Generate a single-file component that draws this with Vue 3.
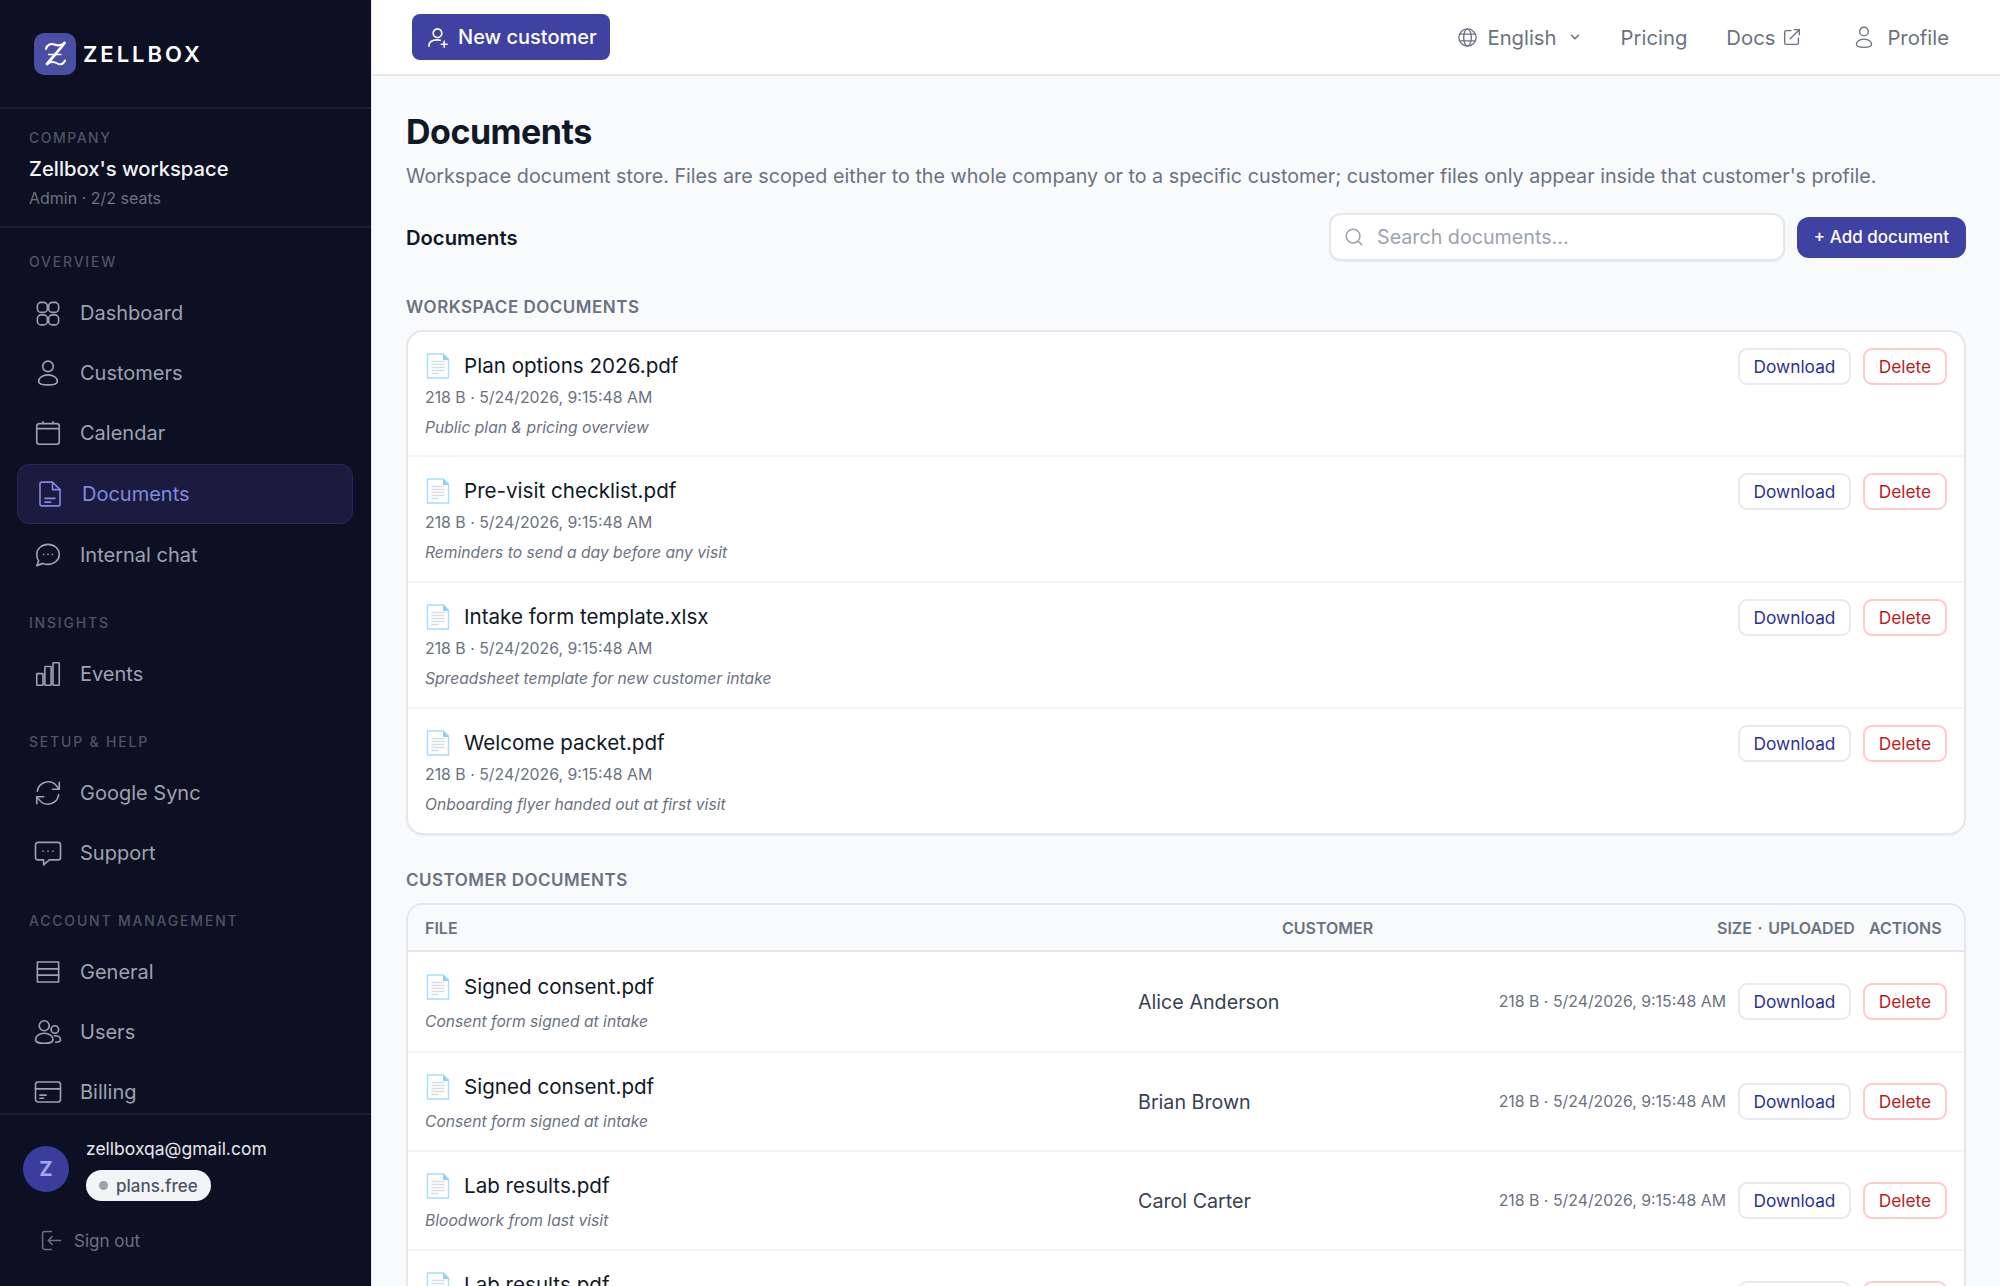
<template>
  <div class="app">
    <aside class="sidebar">
      <div class="brand">
        <svg class="logo" viewBox="0 0 42 42">
          <rect width="42" height="42" rx="10" fill="#4a4fa3" />
          <path d="M12 16C13 11.500 17 10 20.500 11.500C24 13 27.500 12.500 30.500 10" fill="none" stroke="#fff" stroke-width="2" stroke-linecap="round" />
          <path d="M30.500 10C26.500 15.500 18.500 24.500 13 31" fill="none" stroke="#fff" stroke-width="2.800" stroke-linecap="round" />
          <path d="M13 31C16.500 28 20 28.500 23.500 30.500C26.500 32.200 29.500 31 31 27.500" fill="none" stroke="#fff" stroke-width="2" stroke-linecap="round" />
          <path d="M14.500 21.500H27" fill="none" stroke="#fff" stroke-width="1.300" stroke-linecap="round" />
        </svg>
        <span class="wordmark">ZELLBOX</span>
      </div>

      <div class="company">
        <div class="company-label">COMPANY</div>
        <div class="company-name">Zellbox's workspace</div>
        <div class="company-meta">Admin · 2/2 seats</div>
      </div>

      <nav class="nav">
        <template v-for="section in sections" :key="section.title">
          <div class="nav-title">{{ section.title }}</div>
          <a
            v-for="item in section.items"
            :key="item.label"
            class="nav-item"
            :class="{ active: item.label === 'Documents' }"
          >
            <svg class="nav-icon" viewBox="0 0 24 24" fill="none" stroke="currentColor" stroke-width="1.300" stroke-linecap="round" stroke-linejoin="round">
              <path v-for="d in icons[item.icon]" :key="d" :d="d" />
            </svg>
            <span>{{ item.label }}</span>
          </a>
        </template>
      </nav>

      <div class="account">
        <div class="account-row">
          <div class="avatar">Z</div>
          <div class="account-info">
            <div class="email">zellboxqa@gmail.com</div>
            <span class="plan"><i class="plan-dot"></i>plans.free</span>
          </div>
        </div>
        <a class="signout">
          <svg viewBox="0 0 24 24" fill="none" stroke="currentColor" stroke-width="1.300" stroke-linecap="round" stroke-linejoin="round">
            <path d="M13 4H6.500A1.500 1.500 0 0 0 5 5.500v13A1.500 1.500 0 0 0 6.500 20H13M21 12H10M10 12l3.500-3.500M10 12l3.500 3.500" />
          </svg>
          <span>Sign out</span>
        </a>
      </div>
    </aside>

    <div class="main">
      <header class="topbar">
        <button class="new-customer">
          <svg viewBox="0 0 24 24" fill="none" stroke="currentColor" stroke-width="1.700" stroke-linecap="round" stroke-linejoin="round">
            <circle cx="12" cy="7.500" r="4.500" />
            <path d="M3 21c0-4.500 3.800-6.500 9-6.500 1 0 2 .1 2.800.3M19 16v6M16 19h6" />
          </svg>
          New customer
        </button>
        <div class="top-links">
          <a class="top-link lang">
            <svg class="globe" viewBox="0 0 24 24" fill="none" stroke="currentColor" stroke-width="1.400">
              <circle cx="12" cy="12" r="9" />
              <ellipse cx="12" cy="12" rx="4" ry="9" />
              <path d="M3.800 8.500h16.400M3.800 15.500h16.400" />
            </svg>
            English
            <svg class="chevron" viewBox="0 0 12 12" fill="none" stroke="currentColor" stroke-width="1.300" stroke-linecap="round" stroke-linejoin="round">
              <path d="M3 4.500 6 7.500 9 4.500" />
            </svg>
          </a>
          <a class="top-link">Pricing</a>
          <a class="top-link docs">
            Docs
            <svg class="external" viewBox="0 0 24 24" fill="none" stroke="currentColor" stroke-width="1.500" stroke-linecap="round" stroke-linejoin="round">
              <path d="M11 5H5.500A1.500 1.500 0 0 0 4 6.500v12A1.500 1.500 0 0 0 5.500 20h12a1.500 1.500 0 0 0 1.500-1.500V13M10 14 20 4M14.500 4H20v5.500" />
            </svg>
          </a>
          <a class="top-link profile">
            <svg class="person" viewBox="0 0 24 24" fill="none" stroke="currentColor" stroke-width="1.200" stroke-linecap="round">
              <circle cx="12" cy="7" r="4" />
              <path d="M12 14c-4.500 0-7 2.500-7 5 0 1.500 2 2.500 7 2.500s7-1 7-2.500c0-2.500-2.500-5-7-5z" />
            </svg>
            Profile
          </a>
        </div>
      </header>

      <main class="content">
        <h1>Documents</h1>
        <p class="lead">Workspace document store. Files are scoped either to the whole company or to a specific customer; customer files only appear inside that customer's profile.</p>

        <div class="toolbar">
          <h2>Documents</h2>
          <div class="search">
            <svg viewBox="0 0 24 24" fill="none" stroke="currentColor" stroke-width="1.700" stroke-linecap="round">
              <circle cx="11" cy="11" r="7.500" />
              <path d="m16.500 16.500 4 4" />
            </svg>
            <span>Search documents...</span>
          </div>
          <button class="add-doc">+ Add document</button>
        </div>

        <div class="section-label first">WORKSPACE DOCUMENTS</div>
        <div class="card">
          <div v-for="doc in workspaceDocs" :key="doc.name" class="doc-row">
            <div class="doc-info">
              <div class="doc-name">
                <svg class="file-icon" viewBox="0 0 26 26">
                  <path d="M2.500 1h16l5 5v19h-21z" fill="#fff" stroke="#a9dcfa" stroke-width="1.400" />
                  <path d="M18 1v6h6z" fill="#8fd0f7" />
                  <path d="M6.500 8.500h13M6.500 11.500h13M6.500 14.500h13M6.500 17.500h13M6.500 20.500h7" stroke="#d8dde1" stroke-width="1.500" />
                </svg>
                {{ doc.name }}
              </div>
              <div class="doc-meta">218 B · 5/24/2026, 9:15:48 AM</div>
              <div class="doc-note">{{ doc.note }}</div>
            </div>
            <div class="actions">
              <button class="btn-download">Download</button>
              <button class="btn-delete">Delete</button>
            </div>
          </div>
        </div>

        <div class="section-label second">CUSTOMER DOCUMENTS</div>
        <div class="card table">
          <div class="table-head">
            <span>FILE</span>
            <span class="head-customer">CUSTOMER</span>
            <span class="head-size">SIZE · UPLOADED</span>
            <span class="head-actions">ACTIONS</span>
          </div>
          <div v-for="(doc, i) in customerDocs" :key="i" class="table-row">
            <div class="doc-info">
              <div class="doc-name">
                <svg class="file-icon" viewBox="0 0 26 26">
                  <path d="M2.500 1h16l5 5v19h-21z" fill="#fff" stroke="#a9dcfa" stroke-width="1.400" />
                  <path d="M18 1v6h6z" fill="#8fd0f7" />
                  <path d="M6.500 8.500h13M6.500 11.500h13M6.500 14.500h13M6.500 17.500h13M6.500 20.500h7" stroke="#d8dde1" stroke-width="1.500" />
                </svg>
                {{ doc.name }}
              </div>
              <div class="doc-note">{{ doc.note }}</div>
            </div>
            <div class="cell-customer">{{ doc.customer }}</div>
            <div class="cell-meta">218 B · 5/24/2026, 9:15:48 AM</div>
            <div class="actions">
              <button class="btn-download">Download</button>
              <button class="btn-delete">Delete</button>
            </div>
          </div>
        </div>
      </main>
    </div>
  </div>
</template>

<script setup>
const icons = {
  grid: [
    'M6.500 3.500h2a3 3 0 0 1 3 3v2a3 3 0 0 1-3 3h-2a3 3 0 0 1-3-3v-2a3 3 0 0 1 3-3z',
    'M15.500 3.500h2a3 3 0 0 1 3 3v2a3 3 0 0 1-3 3h-2a3 3 0 0 1-3-3v-2a3 3 0 0 1 3-3z',
    'M6.500 13.500h2a3 3 0 0 1 3 3v2a3 3 0 0 1-3 3h-2a3 3 0 0 1-3-3v-2a3 3 0 0 1 3-3z',
    'M15.500 13.500h2a3 3 0 0 1 3 3v2a3 3 0 0 1-3 3h-2a3 3 0 0 1-3-3v-2a3 3 0 0 1 3-3z'
  ],
  person: [
    'M12 2.500a4.200 4.200 0 1 0 0 8.400 4.200 4.200 0 0 0 0-8.400z',
    'M12 13.500c-4.500 0-7.500 2.500-7.500 5.300 0 1.700 3 2.700 7.500 2.700s7.500-1 7.500-2.700c0-2.800-3-5.300-7.500-5.300z'
  ],
  calendar: [
    'M5 4.500h14a2 2 0 0 1 2 2V19a2 2 0 0 1-2 2H5a2 2 0 0 1-2-2V6.500a2 2 0 0 1 2-2z',
    'M3 8.500h18',
    'M8 3v1.500M16 3v1.500'
  ],
  doc: [
    'M5.500 2.500h8.500l6 6v12a1 1 0 0 1-1 1H5.500a1.500 1.500 0 0 1-1.500-1.500V4a1.500 1.500 0 0 1 1.500-1.500z',
    'M14 2.500v6h6',
    'M8 15.500h8M8 18.500h4.500'
  ],
  chat: [
    'M12 3.500c5 0 9 3.500 9 8s-4 8-9 8c-1.500 0-2.800-.3-4-.8l-5 1.800 1.500-3.700C3.500 15.300 3 13.500 3 11.500c0-4.500 4-8 9-8z',
    'M8.500 11.500h.01M12 11.500h.01M15.500 11.500h.01'
  ],
  bars: [
    'M3.500 11.700h4a.5.500 0 0 1 .5.500V20.500a.5.500 0 0 1-.5.500h-4a.5.500 0 0 1-.5-.500v-8.300a.5.500 0 0 1 .5-.500z',
    'M10 6h4a.5.500 0 0 1 .5.500v14a.5.500 0 0 1-.5.500h-4a.5.500 0 0 1-.5-.500v-14a.5.500 0 0 1 .5-.500z',
    'M16.500 3h4a.5.500 0 0 1 .5.500v17a.5.500 0 0 1-.5.500h-4a.5.500 0 0 1-.5-.500v-17a.5.500 0 0 1 .5-.500z'
  ],
  sync: [
    'M3.500 10.500A8.700 8.700 0 0 1 19 6.500l2 2.500',
    'M21 3.500V9h-5.500',
    'M20.500 13.500A8.700 8.700 0 0 1 5 17.500L3 15',
    'M3 20.500V15h5.500'
  ],
  support: [
    'M4 3.500h16a2 2 0 0 1 2 2v10a2 2 0 0 1-2 2h-7l-4.500 4v-4H4a2 2 0 0 1-2-2v-10a2 2 0 0 1 2-2z',
    'M8 10.500h.01M12 10.500h.01M16 10.500h.01'
  ],
  general: [
    'M3.500 4h17v16h-17z',
    'M3.500 9.500h17M3.500 14.500h17'
  ],
  users: [
    'M9 3a4 4 0 1 0 0 8 4 4 0 0 0 0-8z',
    'M17.500 7a3 3 0 1 0 0 6 3 3 0 0 0 0-6z',
    'M9 13c-4 0-7 2.300-7 5.300 0 1.500 2.800 2.700 7 2.700s7-1.200 7-2.700c0-3-3-5.300-7-5.300z',
    'M17 15c3 0 5 1.300 5 3.300 0 1-1.500 1.700-4 1.900'
  ],
  card: [
    'M4 4h16a2 2 0 0 1 2 2v12a2 2 0 0 1-2 2H4a2 2 0 0 1-2-2V6a2 2 0 0 1 2-2z',
    'M2 9.500h20',
    'M5.500 14.500h5M5.500 17h3'
  ]
}

const sections = [
  {
    title: 'OVERVIEW',
    items: [
      { label: 'Dashboard', icon: 'grid' },
      { label: 'Customers', icon: 'person' },
      { label: 'Calendar', icon: 'calendar' },
      { label: 'Documents', icon: 'doc' },
      { label: 'Internal chat', icon: 'chat' }
    ]
  },
  { title: 'INSIGHTS', items: [{ label: 'Events', icon: 'bars' }] },
  {
    title: 'SETUP & HELP',
    items: [
      { label: 'Google Sync', icon: 'sync' },
      { label: 'Support', icon: 'support' }
    ]
  },
  {
    title: 'ACCOUNT MANAGEMENT',
    items: [
      { label: 'General', icon: 'general' },
      { label: 'Users', icon: 'users' },
      { label: 'Billing', icon: 'card' }
    ]
  }
]

const workspaceDocs = [
  { name: 'Plan options 2026.pdf', note: 'Public plan & pricing overview' },
  { name: 'Pre-visit checklist.pdf', note: 'Reminders to send a day before any visit' },
  { name: 'Intake form template.xlsx', note: 'Spreadsheet template for new customer intake' },
  { name: 'Welcome packet.pdf', note: 'Onboarding flyer handed out at first visit' }
]

const customerDocs = [
  { name: 'Signed consent.pdf', note: 'Consent form signed at intake', customer: 'Alice Anderson' },
  { name: 'Signed consent.pdf', note: 'Consent form signed at intake', customer: 'Brian Brown' },
  { name: 'Lab results.pdf', note: 'Bloodwork from last visit', customer: 'Carol Carter' },
  { name: 'Lab results.pdf', note: 'Bloodwork from last visit', customer: 'David Davis' }
]
</script>

<style>
html,
body {
  margin: 0;
  height: 100%;
  overflow: hidden;
}
</style>

<style scoped>
.app {
  display: flex;
  height: 100vh;
  font-family: Inter, "Liberation Sans", sans-serif;
  color: #111827;
  background: #f9fafb;
  overflow: hidden;
}

/* sidebar */
.sidebar {
  width: 372px;
  flex-shrink: 0;
  display: flex;
  flex-direction: column;
  background: #0d0f23;
  border-right: 1px solid #e5e7eb;
  box-sizing: border-box;
}

.brand {
  height: 109px;
  flex-shrink: 0;
  box-sizing: border-box;
  display: flex;
  align-items: center;
  gap: 7px;
  padding: 0 0 0 34px;
  border-bottom: 2px solid #1b1c38;
}

.logo {
  width: 42px;
  height: 42px;
}

.wordmark {
  color: #fff;
  font-size: 22px;
  font-weight: 600;
  letter-spacing: 3px;
}

.company {
  height: 119px;
  flex-shrink: 0;
  box-sizing: border-box;
  padding: 20px 29px 0;
  border-bottom: 2px solid #1b1c38;
}

.company-label {
  color: #4b5563;
  font-size: 14px;
  font-weight: 500;
  letter-spacing: 1.500px;
  line-height: 18px;
}

.company-name {
  margin-top: 8px;
  color: #f3f4f6;
  font-size: 20.200px;
  font-weight: 500;
  line-height: 28px;
}

.company-meta {
  margin-top: 5px;
  color: #6b7280;
  font-size: 16px;
  line-height: 20px;
}

.nav {
  flex: 1;
  min-height: 0;
  overflow: hidden;
  padding: 24px 18px 0 17px;
}

.nav-title {
  margin: 0 12px 12px;
  color: #4b5563;
  font-size: 14px;
  font-weight: 500;
  letter-spacing: 1.800px;
  line-height: 20px;
}

.nav-item + .nav-title {
  margin-top: 29px;
}

.nav-item {
  display: flex;
  align-items: center;
  gap: 17px;
  height: 58px;
  margin-bottom: 2px;
  padding: 0 15px;
  box-sizing: border-box;
  color: #9ca3af;
  font-size: 20px;
  border: 1px solid transparent;
  border-radius: 12px;
}

.nav-item.active {
  height: 60px;
  padding-left: 17px;
  color: #8388e0;
  background: #1a1b3e;
  border-color: #25275a;
}

.nav-icon {
  width: 30px;
  height: 30px;
  flex-shrink: 0;
}

.account {
  height: 173px;
  flex-shrink: 0;
  box-sizing: border-box;
  padding: 21px 23px 0;
  border-top: 2px solid #1b1c38;
}

.account-row {
  display: flex;
  align-items: center;
  gap: 17px;
}

.avatar {
  width: 46px;
  height: 46px;
  border-radius: 50%;
  background: #3b3d9c;
  color: #a5a8ee;
  display: flex;
  align-items: center;
  justify-content: center;
  font-size: 20px;
  font-weight: 700;
}

.email {
  color: #e5e7eb;
  font-size: 17.500px;
  line-height: 26px;
}

.plan {
  display: inline-flex;
  align-items: center;
  gap: 8px;
  height: 31px;
  margin-top: 8px;
  padding: 0 13px;
  box-sizing: border-box;
  border-radius: 16px;
  background: #f3f4f6;
  color: #4b5563;
  font-size: 17px;
  font-weight: 500;
}

.plan-dot {
  width: 9px;
  height: 9px;
  border-radius: 50%;
  background: #9ca3af;
}

.signout {
  display: flex;
  align-items: center;
  gap: 10px;
  margin: 26px 0 0 14px;
  color: #6b7280;
  font-size: 17px;
}

.signout svg {
  width: 27px;
  height: 27px;
}

/* main column */
.main {
  flex: 1;
  min-width: 0;
  display: flex;
  flex-direction: column;
}

.topbar {
  height: 76px;
  flex-shrink: 0;
  box-sizing: border-box;
  background: #fff;
  border-bottom: 2px solid #e5e7eb;
  display: flex;
  align-items: center;
  justify-content: space-between;
  padding: 0 51px 0 40px;
}

.new-customer {
  display: flex;
  align-items: center;
  gap: 9px;
  width: 198px;
  height: 46px;
  padding: 0 14px;
  border: 0;
  border-radius: 8px;
  background: #3f42a0;
  color: #fff;
  font: 500 20px Inter, sans-serif;
  white-space: nowrap;
}

.new-customer svg {
  width: 23px;
  height: 23px;
  flex-shrink: 0;
}

.top-links {
  display: flex;
  align-items: center;
  color: #6b7280;
  font-size: 20.300px;
}

.top-link {
  display: flex;
  align-items: center;
}

.lang {
  gap: 8px;
}

.globe {
  width: 23px;
  height: 23px;
}

.chevron {
  width: 14px;
  height: 14px;
  margin-left: 3px;
}

.top-link + .top-link {
  margin-left: 39px;
}

.docs {
  gap: 6px;
}

.external {
  width: 22px;
  height: 22px;
}

.top-link.profile {
  margin-left: 48px;
  gap: 10px;
}

.person {
  width: 26px;
  height: 26px;
}

.content {
  flex: 1;
  min-height: 0;
  overflow: hidden;
  padding: 34px 34px 0;
}

h1 {
  margin: 0;
  font-size: 34px;
  line-height: 44px;
  font-weight: 700;
  letter-spacing: -0.500px;
}

.lead {
  margin: 8px 0 0;
  color: #6b7280;
  font-size: 19.730px;
  line-height: 28px;
}

.toolbar {
  display: flex;
  align-items: center;
  margin-top: 23px;
  height: 48px;
}

h2 {
  margin: 0 auto 0 0;
  font-size: 20.200px;
  font-weight: 600;
}

.search {
  display: flex;
  align-items: center;
  gap: 12px;
  width: 456px;
  height: 48px;
  padding: 0 12px;
  box-sizing: border-box;
  background: #fff;
  border: 2px solid #e5e7eb;
  border-radius: 12px;
  box-shadow: 0 1px 2px rgba(0, 0, 0, 0.06);
  color: #9ca3af;
  font-size: 19.700px;
}

.search svg {
  width: 22px;
  height: 22px;
  flex-shrink: 0;
}

.add-doc {
  width: 169px;
  height: 41px;
  margin-left: 12px;
  border: 0;
  border-radius: 12px;
  background: #3f42a0;
  color: #fff;
  font: 500 17px Inter, sans-serif;
}

.section-label {
  margin-bottom: 12px;
  color: #6b7280;
  font-size: 17px;
  font-weight: 600;
  letter-spacing: 0.500px;
  line-height: 22px;
}

.section-label.first {
  margin-top: 35px;
}

.section-label.second {
  margin-top: 34px;
  margin-bottom: 12px;
}

.card {
  background: #fff;
  border: 2px solid #e5e7eb;
  border-radius: 17px;
  box-shadow: 0 1px 2px rgba(0, 0, 0, 0.04);
  overflow: hidden;
}

.doc-row {
  display: flex;
  justify-content: space-between;
  align-items: flex-start;
  height: 126px;
  box-sizing: border-box;
  padding: 18px 17px 0;
  border-top: 2px solid #f3f4f6;
}

.doc-row:first-child {
  border-top: 0;
  height: 123px;
}

.doc-name {
  display: flex;
  align-items: center;
  gap: 13px;
  font-size: 20.600px;
  font-weight: 400;
  line-height: 32px;
}

.file-icon {
  width: 26px;
  height: 26px;
  flex-shrink: 0;
}

.doc-meta {
  margin-top: 5px;
  color: #6b7280;
  font-size: 15.850px;
  line-height: 22px;
}

.doc-note {
  margin-top: 8px;
  color: #6b7280;
  font-size: 15.650px;
  font-style: italic;
  line-height: 22px;
}

.actions {
  display: flex;
  gap: 12px;
  margin-top: -2px;
}

.actions button {
  height: 37px;
  padding: 0;
  background: #fff;
  border-radius: 9px;
  font: 400 17.300px Inter, sans-serif;
}

.btn-download {
  width: 113px;
  color: #2c3194;
  border: 2px solid #e7e8f2;
}

.btn-delete {
  width: 84px;
  color: #b91c1c;
  border: 2px solid #fecaca;
}

.table-head {
  display: grid;
  grid-template-columns: 857px 435px 152px 1fr;
  align-items: center;
  height: 47px;
  box-sizing: border-box;
  padding: 0 17px;
  background: #f9fafb;
  border-bottom: 2px solid #e5e7eb;
  color: #6b7280;
  font-size: 16px;
  font-weight: 600;
}

.head-size {
  word-spacing: 1.500px;
}

.table-row {
  display: flex;
  align-items: center;
  height: 99px;
  box-sizing: border-box;
  padding: 0 17px;
  border-top: 2px solid #f3f4f6;
}

.table-head + .table-row {
  border-top: 0;
}

.table-row .actions {
  margin-top: 0;
}

.table-row .doc-note {
  margin-top: 8px;
}

.table-row .doc-info {
  width: 713px;
  flex-shrink: 0;
}

.cell-customer {
  flex: 1;
  font-size: 19.700px;
  color: #374151;
}

.cell-meta {
  margin-right: 12px;
  color: #6b7280;
  font-size: 15.850px;
}
</style>
